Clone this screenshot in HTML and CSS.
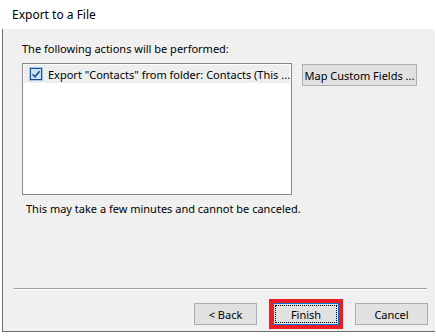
FILE: index.html
```html
<!DOCTYPE html>
<html lang="en">
<head>
  <meta charset="UTF-8" />
  <title>Export to a File</title>
  <link rel="stylesheet" href="styles.css">
</head>
<body>
  <div class="window">
    <div class="titlebar">Export to a File</div>
    <div class="frame">
      <div class="content">
        <p class="lead">The following actions will be performed:</p>
        <div class="row">
          <div class="list">
            <div class="item">
              <svg class="check" width="14" height="14" viewBox="0 0 14 14">
                <rect x="0" y="0" width="14" height="14" fill="#9dcbf0"/>
                <rect x="1.5" y="1.5" width="11" height="11" fill="#cce4f7" stroke="#1c4e8c"/>
                <path d="M3.5 7.2 L6 9.7 L10.6 4.2" fill="none" stroke="#1c4e8c" stroke-width="1.6"/>
              </svg>
              <span>Export "Contacts" from folder: Contacts (This ...</span>
            </div>
          </div>
          <button class="btn map">Map Custom Fields ...</button>
        </div>
        <p class="note">This may take a few minutes and cannot be canceled.</p>
      </div>
      <!-- Tombol bawah -->
      <div class="footer">
        <div class="sep"></div>
        <div class="buttons">
          <button class="btn back">&lt; Back</button>
          <span class="mark"><button class="btn finish">Finish</button></span>
          <button class="btn cancel">Cancel</button>
        </div>
      </div>
    </div>
  </div>
</body>
</html>
```

FILE: styles.css
```css
body {
  margin: 0;
  background: #ffffff;
  font-family: 'Noto Sans', sans-serif;
  font-size: 11px;
  color: #000;
}
.window {
  width: 436px;
  height: 336px;
}
.titlebar {
  height: 29px;
  padding-left: 12px;
  line-height: 30px;
  font-size: 12px;
}
.frame {
  margin-left: 2px;
  width: 432px;
  height: 302px;
  background: #f0f0f0;
  border-left: 1px solid #6e6e6e;
  border-bottom: 1px solid #6e6e6e;
  display: flex;
  flex-direction: column;
}
.content {
  padding: 12px 0 0 19px;
  flex: 1;
}
.lead {
  margin: 0;
  height: 22px;
  line-height: 16px;
}
.row {
  display: flex;
  align-items: flex-start;
}
.list {
  width: 268px;
  height: 130px;
  background: #fff;
  border: 1px solid #828790;
}
.item {
  height: 18px;
  margin: 1px 1px 0 1px;
  background: #eeeeee;
  display: flex;
  align-items: center;
  gap: 5px;
  padding-left: 5px;
  white-space: nowrap;
  overflow: hidden;
}
.check {
  flex: none;
}
.btn {
  font-family: 'Noto Sans', sans-serif;
  font-size: 11px;
  color: #000;
  background: #e1e1e1;
  border: 1px solid #adadad;
  padding: 0;
  height: 22px;
  white-space: nowrap;
}
.map {
  margin: 1px 0 0 10px;
  width: 115px;
}
.note {
  margin: 0;
  padding: 6px 0 0 4px;
  line-height: 16px;
}
.footer {
  padding: 0 0 2px 11px;
}
.sep {
  width: 413px;
  border-top: 1px solid #a0a0a0;
  border-bottom: 1px solid #ffffff;
}
.buttons {
  display: flex;
  align-items: center;
  padding: 9px 0 0 180px;
  gap: 12px;
}
.back {
  width: 63px;
}
.mark {
  border: 4px solid #ed1c24;
  display: flex;
}
.finish {
  width: 66px;
  border-color: #0078d7;
  outline: 1px dotted #000;
  outline-offset: -3px;
}
.cancel {
  width: 73px;
}
```
